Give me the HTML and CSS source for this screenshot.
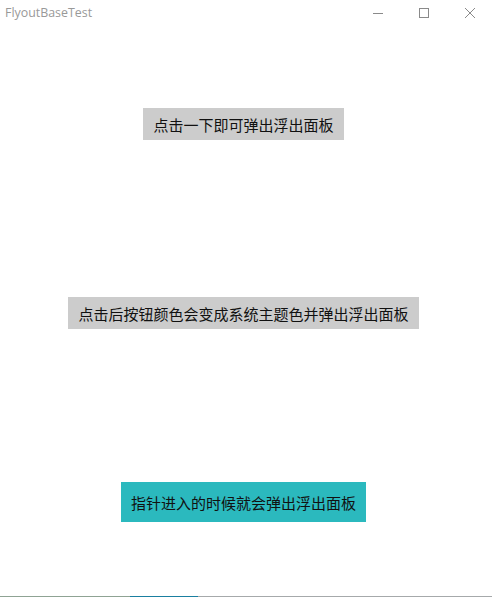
FILE: index.html
```html
<!DOCTYPE html>
<html lang="zh-CN">
<head>
<meta charset="utf-8">
<link rel="stylesheet" href="styles.css">
</head>
<body>
<div class="window">
  <div class="titlebar">
    <span class="title">FlyoutBaseTest</span>
    <div class="controls">
      <span class="ctl"><svg width="12" height="12" viewBox="0 0 12 12"><path d="M1 6.5h10" stroke="#8a8a8a" stroke-width="1"/></svg></span>
      <span class="ctl"><svg width="12" height="12" viewBox="0 0 12 12"><rect x="1.5" y="1.5" width="9" height="9" fill="none" stroke="#8a8a8a" stroke-width="1"/></svg></span>
      <span class="ctl"><svg width="12" height="12" viewBox="0 0 12 12"><path d="M1 1L11 11M11 1L1 11" stroke="#8a8a8a" stroke-width="1"/></svg></span>
    </div>
  </div>
  <div class="content">
    <div class="btn btn-a">点击一下即可弹出浮出面板</div>
    <div class="btn btn-b">点击后按钮颜色会变成系统主题色并弹出浮出面板</div>
    <div class="btn btn-c">指针进入的时候就会弹出浮出面板</div>
  </div>
  <div class="strip">
    <span class="seg seg1"></span>
    <span class="seg seg2"></span>
    <span class="seg seg3"></span>
  </div>
</div>
</body>
</html>
```
FILE: styles.css
```css
html, body {
  margin: 0;
  padding: 0;
  background: #ffffff;
}
.window {
  width: 492px;
  height: 597px;
  display: flex;
  flex-direction: column;
  overflow: hidden;
}
.titlebar {
  height: 25px;
  display: flex;
  align-items: center;
  justify-content: space-between;
  padding-left: 5px;
}
.title {
  font-family: "Open Sans", "Noto Sans", sans-serif;
  font-size: 12.4px;
  color: #999999;
}
.controls {
  display: flex;
  align-self: stretch;
  align-items: center;
  padding-right: 16px;
  gap: 34px;
}
.ctl {
  width: 12px;
  height: 12px;
  display: flex;
}
.content {
  width: 487px;
  display: flex;
  flex-direction: column;
  align-items: center;
  padding-top: 83px;
  flex: 1;
}
.btn {
  font-family: "Noto Sans CJK SC", sans-serif;
  font-size: 15px;
  color: #111111;
  background: #cccccc;
  padding: 0 10px;
  height: 32px;
  display: flex;
  align-items: center;
  white-space: nowrap;
}
.btn-b {
  margin-top: 157px;
}
.btn-c {
  margin-top: 153px;
  height: 40px;
  background: #2bb9be;
}
.strip {
  height: 1px;
  display: flex;
}
.seg1 { width: 130px; background: #8fa394; }
.seg2 { width: 68px; background: #1a7fa0; }
.seg3 { flex: 1; background: #a6a9ab; }
```
